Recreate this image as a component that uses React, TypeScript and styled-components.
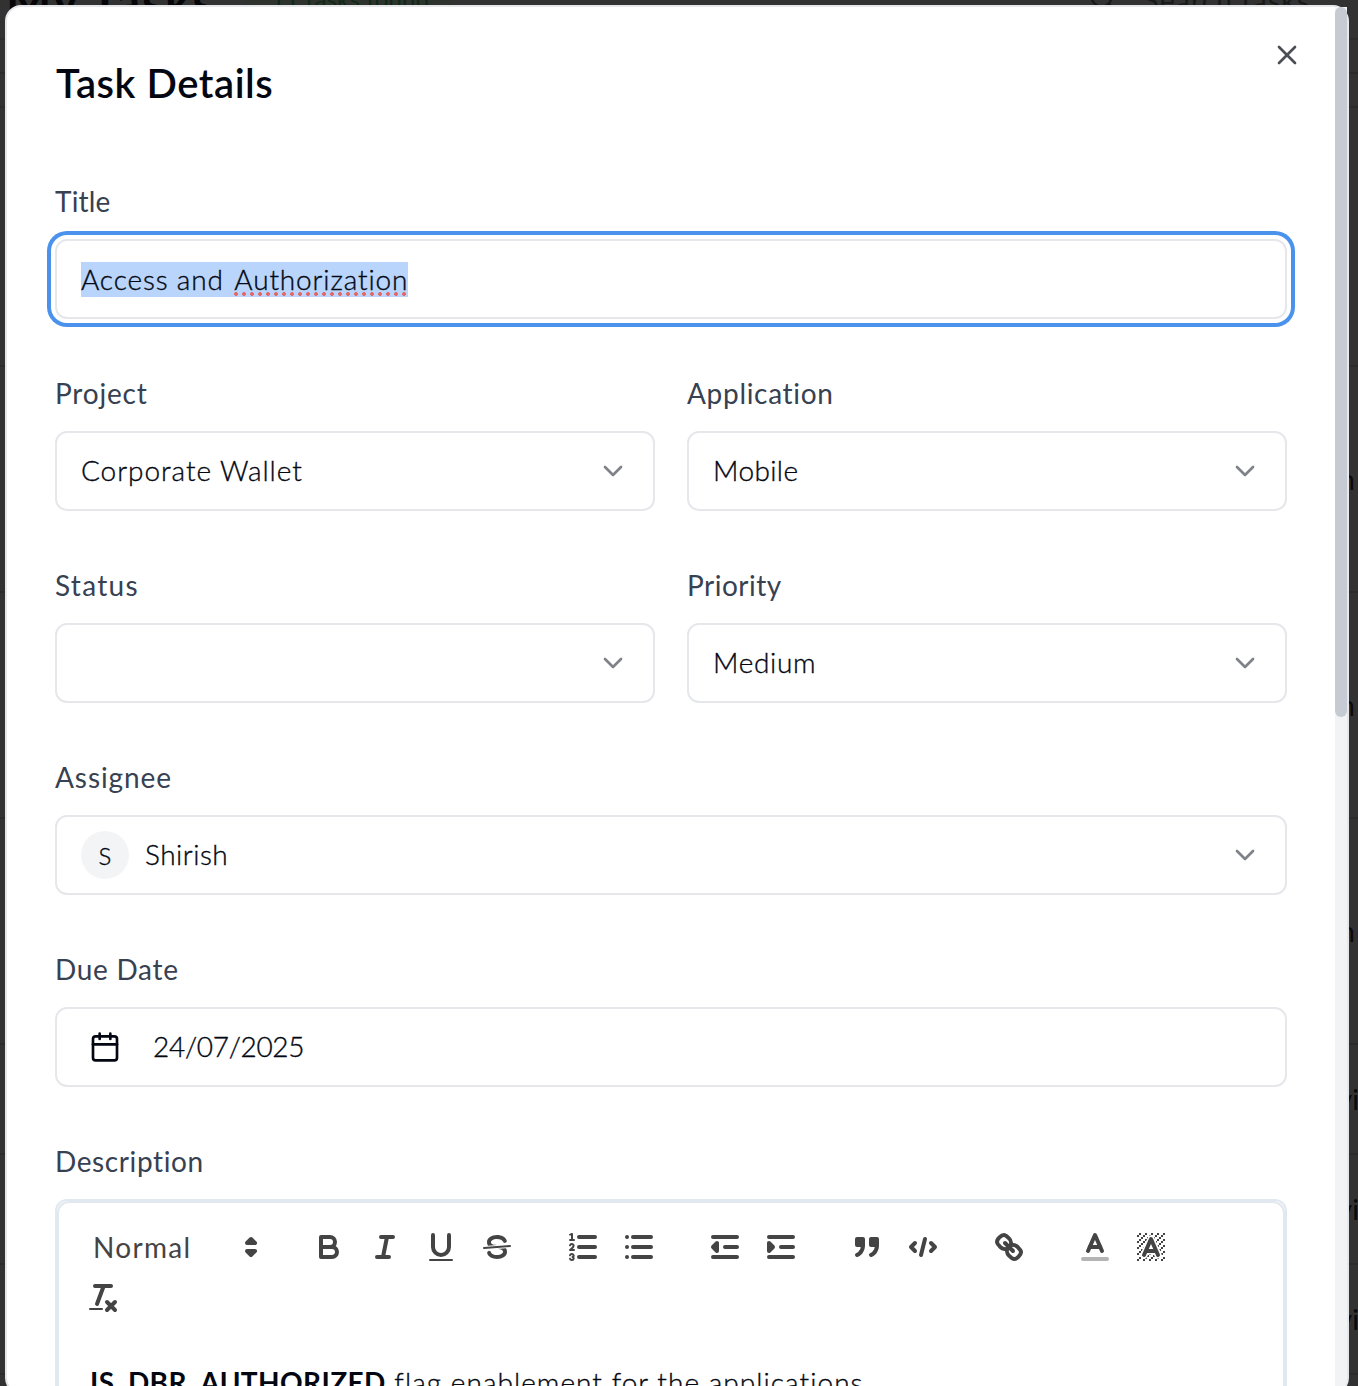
import React from "react";
import styled, { createGlobalStyle } from "styled-components";
import { Calendar, ChevronDown, Search, X } from "lucide-react";

const GlobalStyle = createGlobalStyle`
  *, *::before, *::after { box-sizing: border-box; }
  body {
    margin: 0;
    background: #323232;
    font-family: Lato, "Open Sans", sans-serif;
    font-variant-ligatures: none;
    overflow: hidden;
  }
`;

const Page = styled.div`
  position: relative;
  width: 1358px;
  height: 1386px;
  overflow: hidden;
  background: #323232;
`;

/* ---------- dimmed page behind the dialog ---------- */

const Behind = styled.div`
  display: flex;
  flex-direction: column;
  height: 100%;
`;

const BehindHeader = styled.header`
  display: flex;
  align-items: flex-end;
  height: 40px;
  padding: 0 48px 0 6px;
  border-bottom: 2px solid #2c2c2c;
`;

const BehindHeading = styled.div`
  width: 240px;
  height: 61px;
  font-size: 48px;
  line-height: 48px;
  font-weight: 700;
  letter-spacing: 1.8px;
  color: #060609;
  white-space: nowrap;
`;

const BehindBadge = styled.div`
  width: 206px;
  height: 60px;
  padding-left: 25px;
  border-radius: 0 0 20px 20px;
  background: #2e332e;
  color: #0f2a16;
  font-size: 24px;
  line-height: 42px;
  letter-spacing: 0.2px;
  white-space: nowrap;
`;

const BehindSearch = styled.div`
  display: flex;
  gap: 26px;
  height: 56px;
  margin-left: auto;
  width: 222px;
  color: #191919;
  font-size: 28px;
  line-height: 36px;
  letter-spacing: 1.2px;
  white-space: nowrap;
`;

const BehindRow = styled.div<{ $h: number }>`
  display: flex;
  align-items: center;
  justify-content: flex-end;
  flex: none;
  height: ${(p) => p.$h}px;
  border-bottom: 2px solid #2b2b2b;
  font-size: 28px;
  color: #0a0a0a;
`;

const CellEnd = styled.span<{ $inset: number }>`
  margin-right: ${(p) => p.$inset}px;
`;

/* ---------- dialog ---------- */

const Dialog = styled.section`
  position: absolute;
  top: 5px;
  left: 5px;
  display: flex;
  width: 1344px;
  height: 1389px;
  border: 2px solid #e5e7eb;
  border-radius: 16px;
  background: #fff;
`;

const Body = styled.div`
  display: flex;
  flex-direction: column;
  flex: 1;
  height: 1379px;
  padding: 32px 48px 0;
  overflow: hidden;
`;

const ScrollTrack = styled.div`
  width: 12px;
  border-radius: 0 0 14px 0;
  background: #f1f3f5;
`;

const ScrollThumb = styled.div`
  height: 710px;
  border-radius: 6px;
  background: #c5cad3;
`;

const Header = styled.header`
  display: flex;
  justify-content: space-between;
  flex: none;
  height: 142px;
`;

const Heading = styled.h2`
  margin: 20px 0 0 1px;
  font-size: 40px;
  line-height: 48px;
  font-weight: 600;
  letter-spacing: 0.55px;
  color: #030712;
`;

const CloseButton = styled.button`
  display: flex;
  width: 32px;
  height: 32px;
  margin-right: -16px;
  padding: 0;
  border: 0;
  background: none;
  color: #4b4e55;
`;

const Form = styled.div`
  display: flex;
  flex-direction: column;
  gap: 54px;
`;

const Columns = styled.div`
  display: grid;
  grid-template-columns: 1fr 1fr;
  gap: 32px;
`;

const Field = styled.div`
  display: flex;
  flex-direction: column;
  gap: 18px;
`;

const Label = styled.label<{ $ls?: number }>`
  font-size: 28px;
  line-height: 40px;
  font-weight: 400;
  letter-spacing: ${(p) => p.$ls ?? 0.5}px;
  color: #374151;
`;

const Control = styled.div<{ $focused?: boolean }>`
  display: flex;
  align-items: center;
  height: 80px;
  padding: 0 24px;
  border: 2px solid #e5e7eb;
  border-radius: 12px;
  background: #fff;
  color: #80828a;
  box-shadow: ${(p) => (p.$focused ? "0 0 0 4px #fff, 0 0 0 8px #4a92ec" : "none")};
`;

const Value = styled.span<{ $ls?: number }>`
  flex: 1;
  padding-bottom: 2px;
  font-size: 28px;
  line-height: 40px;
  font-weight: 300;
  letter-spacing: ${(p) => p.$ls ?? 0}px;
  -webkit-text-stroke: 0.35px #030712;
  color: #030712;
`;

const Selection = styled.span`
  display: flex;
  height: 35px;
  margin-top: 1px;
  font-size: 28px;
  line-height: 35px;
  font-weight: 300;
  letter-spacing: 0.86px;
  -webkit-text-stroke: 0.35px #030712;
  white-space: pre;
  color: #030712;
  background: #b9d5fb;
`;

const Misspelled = styled.span`
  margin-left: 2px;
  background: radial-gradient(circle at 2px 2px, #e26a6a 1.7px, transparent 2.2px) 0 30px / 8px 4px repeat-x;
`;

const Avatar = styled.span`
  display: flex;
  align-items: center;
  justify-content: center;
  width: 48px;
  height: 48px;
  margin-right: 16px;
  border-radius: 50%;
  background: #f3f4f6;
  color: #030712;
  font-size: 24px;
  font-weight: 300;
  -webkit-text-stroke: 0.35px #030712;
`;

const DateIcon = styled.span`
  display: flex;
  margin: 0 32px 0 8px;
  color: #030712;
`;

/* ---------- rich text editor ---------- */

const Editor = styled.div`
  flex: none;
  height: 240px;
  border: 2px solid #e2e8f0;
  border-radius: 12px;
`;

const EditorInner = styled.div`
  height: 100%;
  border: 2px solid #e2e8f0;
  border-radius: 12px;
`;

const Toolbar = styled.div`
  display: flex;
  flex-wrap: wrap;
  row-gap: 3px;
  padding: 20px 16px 0;
  color: #444;
`;

const FormatPicker = styled.div`
  display: flex;
  align-items: center;
  justify-content: space-between;
  width: 196px;
  height: 48px;
  margin-right: 30px;
  padding: 0 2px 0 18px;
  font-size: 28px;
  letter-spacing: 1.3px;
`;

const ToolGroup = styled.div`
  display: flex;
  margin-right: 30px;
`;

const ToolButton = styled.button`
  display: flex;
  align-items: center;
  justify-content: center;
  width: 56px;
  height: 48px;
  padding: 0;
  border: 0;
  background: none;
  color: inherit;
`;

const Content = styled.p`
  margin: 40px 0 0;
  padding: 0 31px;
  font-size: 28px;
  line-height: 40px;
  font-weight: 300;
  letter-spacing: 1.05px;
  -webkit-text-stroke: 0.35px #030712;
  white-space: nowrap;
  color: #030712;
`;

const Strong = styled.strong`
  font-weight: 700;
  letter-spacing: 0.4px;
  -webkit-text-stroke: 0;
`;

const Glyph = styled.svg`
  display: block;
  width: 36px;
  height: 36px;
  fill: none;
  stroke: currentColor;
  stroke-width: 2;
  stroke-linecap: round;
  stroke-linejoin: round;

  .fill { fill: currentColor; }
  .solid { fill: currentColor; stroke: none; }
  .thin { stroke-width: 1; }
  .faint { opacity: 0.4; }
  .halo { stroke: #fff; stroke-width: 3.6; }
`;

const hatch = Array.from({ length: 14 * 14 }, (_, i) => [i % 14, Math.floor(i / 14)]).filter(
  ([x, y]) => (x + y) % 3 === 1
);

const icons: Record<string, React.ReactNode> = {
  bold: (
    <>
      <path d="M5,4H9.5A2.5,2.5,0,0,1,12,6.5v0A2.5,2.5,0,0,1,9.5,9H5Z" />
      <path d="M5,9h5.5A2.5,2.5,0,0,1,13,11.5v0A2.5,2.5,0,0,1,10.5,14H5Z" />
    </>
  ),
  italic: <path d="M7 4H13M5 14H11M8 14L10 4" />,
  underline: (
    <>
      <path d="M5,3V9a4.012,4.012,0,0,0,4,4H9a4.012,4.012,0,0,0,4-4V3" />
      <rect className="solid" height="1" rx="0.5" width="12" x="3" y="15" />
    </>
  ),
  strike: (
    <>
      <line className="thin" x1="15.5" x2="2.5" y1="8.5" y2="9.5" />
      <path className="solid" d="M9.007,8C6.542,7.791,6,7.519,6,6.5,6,5.792,7.283,5,9,5c1.571,0,2.765.679,2.969,1.309a1,1,0,0,0,1.9-.617C13.356,4.106,11.354,3,9,3,6.2,3,4,4.538,4,6.5a3.2,3.2,0,0,0,.5,1.843Z" />
      <path className="solid" d="M8.984,10C11.457,10.208,12,10.479,12,11.5c0,0.708-1.283,1.5-3,1.5-1.571,0-2.765-.679-2.969-1.309a1,1,0,1,0-1.9.617C4.644,13.894,6.646,15,9,15c2.8,0,5-1.538,5-3.5a3.2,3.2,0,0,0-.5-1.843Z" />
    </>
  ),
  ordered: (
    <>
      <path d="M7 4H15M7 9H15M7 14H15" />
      <line className="thin" x1="2.5" x2="4.5" y1="5.5" y2="5.5" />
      <path className="solid" d="M3.5,6A0.5,0.5,0,0,1,3,5.5V3.085l-0.276.138A0.5,0.5,0,0,1,2.053,3c-0.124-.247-0.023-0.324.224-0.447l1-.5A0.5,0.5,0,0,1,4,2.5v3A0.5,0.5,0,0,1,3.5,6Z" />
      <path className="thin" d="M4.5,10.5h-2c0-.234,1.85-1.076,1.85-2.234A0.959,0.959,0,0,0,2.5,8.156" />
      <path className="thin" d="M2.5,14.846a0.959,0.959,0,0,0,1.85-.109A0.7,0.7,0,0,0,3.75,14a0.688,0.688,0,0,0,.6-0.736,0.959,0.959,0,0,0-1.85-.109" />
    </>
  ),
  bullet: <path d="M6 4H15M6 9H15M6 14H15M3 4H3.01M3 9H3.01M3 14H3.01" />,
  outdent: (
    <>
      <path d="M3 14H15M3 4H15M9 9H15" />
      <polyline className="fill" points="5 7 5 11 3 9 5 7" />
    </>
  ),
  indent: (
    <>
      <path d="M3 14H15M3 4H15M9 9H15" />
      <polyline className="fill" points="3 7 3 11 5 9 3 7" />
    </>
  ),
  quote: (
    <>
      <rect className="fill" height="3" width="3" x="4" y="5" />
      <rect className="fill" height="3" width="3" x="11" y="5" />
      <path className="fill" d="M7,8c0,4.031-3,5-3,5" />
      <path className="fill" d="M14,8c0,4.031-3,5-3,5" />
    </>
  ),
  code: (
    <>
      <polyline points="5 7 3 9 5 11" />
      <polyline points="13 7 15 9 13 11" />
      <line x1="10" x2="8" y1="5" y2="13" />
    </>
  ),
  link: (
    <>
      <line x1="7" x2="11" y1="7" y2="11" />
      <path d="M8.9,4.577a3.476,3.476,0,0,1,.36,4.679A3.476,3.476,0,0,1,4.577,8.9C3.185,7.5,2.035,6.4,4.217,4.217S7.5,3.185,8.9,4.577Z" />
      <path d="M13.423,9.1a3.476,3.476,0,0,0-4.679-.36,3.476,3.476,0,0,0,.36,4.679c1.392,1.392,2.5,2.542,4.679.36S14.815,10.5,13.423,9.1Z" />
    </>
  ),
  color: (
    <>
      <line className="faint" x1="3" x2="15" y1="15" y2="15" />
      <polyline points="5.5 11 9 3 12.5 11" />
      <line x1="11.63" x2="6.38" y1="9" y2="9" />
    </>
  ),
  background: (
    <>
      {hatch.map(([x, y]) => (
        <rect className="solid" key={`${x}-${y}`} x={x + 2} y={y + 2} width="1" height="1" />
      ))}
      <path className="halo" d="M5.5 13L9 5L12.5 13M11.63 11H6.38" />
      <path d="M5.5 13L9 5L12.5 13M11.63 11H6.38" />
    </>
  ),
  clean: (
    <>
      <path d="M5 3H13M6 12L9.35 3M11 11L15 15M15 11L11 15" />
      <rect className="solid" height="1" rx="0.5" width="7" x="2" y="14" />
    </>
  ),
  picker: (
    <>
      <polygon className="fill" points="7 11 9 13 11 11 7 11" />
      <polygon className="fill" points="7 7 9 5 11 7 7 7" />
    </>
  ),
};

const ToolIcon = ({ name }: { name: string }) => <Glyph viewBox="0 0 18 18">{icons[name]}</Glyph>;

const toolGroups = [
  ["bold", "italic", "underline", "strike"],
  ["ordered", "bullet"],
  ["outdent", "indent"],
  ["quote", "code"],
  ["link"],
  ["color", "background"],
  ["clean"],
];

const behindRows: { h: number; text?: string; inset?: number }[] = [
  { h: 34 },
  { h: 34 },
  { h: 259 },
  { h: 226, text: "Open", inset: 3 },
  { h: 226, text: "Open", inset: 3 },
  { h: 226, text: "Open", inset: 3 },
  { h: 110, text: "Revi", inset: -1 },
  { h: 110, text: "Revi", inset: -1 },
  { h: 110, text: "Revi", inset: -1 },
];

interface SelectProps {
  label: string;
  labelSpacing?: number;
  value?: string;
  valueSpacing?: number;
  initial?: string;
}

const SelectField = ({ label, labelSpacing, value, valueSpacing, initial }: SelectProps) => (
  <Field>
    <Label $ls={labelSpacing}>{label}</Label>
    <Control>
      {initial && <Avatar>{initial}</Avatar>}
      <Value $ls={valueSpacing}>{value}</Value>
      <ChevronDown size={32} />
    </Control>
  </Field>
);

export default function App() {
  return (
    <Page>
      <GlobalStyle />
      <Behind>
        <BehindHeader>
          <BehindHeading>My Tasks</BehindHeading>
          <BehindBadge>11 tasks found</BehindBadge>
          <BehindSearch>
            <Search size={32} />
            Search tasks
          </BehindSearch>
        </BehindHeader>
        {behindRows.map((row, i) => (
          <BehindRow key={i} $h={row.h}>
            {row.text && <CellEnd $inset={row.inset ?? 0}>{row.text}</CellEnd>}
          </BehindRow>
        ))}
      </Behind>

      <Dialog>
        <Body>
          <Header>
            <Heading>Task Details</Heading>
            <CloseButton aria-label="Close">
              <X size={32} />
            </CloseButton>
          </Header>
          <Form>
            <Field>
              <Label $ls={0.2}>Title</Label>
              <Control $focused>
                <Selection>
                  Access and <Misspelled>Authorization</Misspelled>
                </Selection>
              </Control>
            </Field>
            <Columns>
              <SelectField label="Project" labelSpacing={0.8} value="Corporate Wallet" valueSpacing={0.95} />
              <SelectField label="Application" labelSpacing={0.7} value="Mobile" valueSpacing={0.4} />
            </Columns>
            <Columns>
              <SelectField label="Status" labelSpacing={1.3} />
              <SelectField label="Priority" labelSpacing={0.5} value="Medium" valueSpacing={0.7} />
            </Columns>
            <SelectField label="Assignee" labelSpacing={0.9} value="Shirish" valueSpacing={0.5} initial="S" />
            <Field>
              <Label $ls={0.7}>Due Date</Label>
              <Control>
                <DateIcon>
                  <Calendar size={32} />
                </DateIcon>
                <Value $ls={-0.3}>24/07/2025</Value>
              </Control>
            </Field>
            <Field>
              <Label $ls={0.6}>Description</Label>
              <Editor>
                <EditorInner>
                  <Toolbar>
                    <FormatPicker>
                      Normal
                      <ToolIcon name="picker" />
                    </FormatPicker>
                    {toolGroups.map((group) => (
                      <ToolGroup key={group[0]}>
                        {group.map((name) => (
                          <ToolButton key={name} aria-label={name}>
                            <ToolIcon name={name} />
                          </ToolButton>
                        ))}
                      </ToolGroup>
                    ))}
                  </Toolbar>
                  <Content>
                    <Strong>IS_DBR_AUTHORIZED</Strong> flag enablement for the applications
                  </Content>
                </EditorInner>
              </Editor>
            </Field>
          </Form>
        </Body>
        <ScrollTrack>
          <ScrollThumb />
        </ScrollTrack>
      </Dialog>
    </Page>
  );
}
